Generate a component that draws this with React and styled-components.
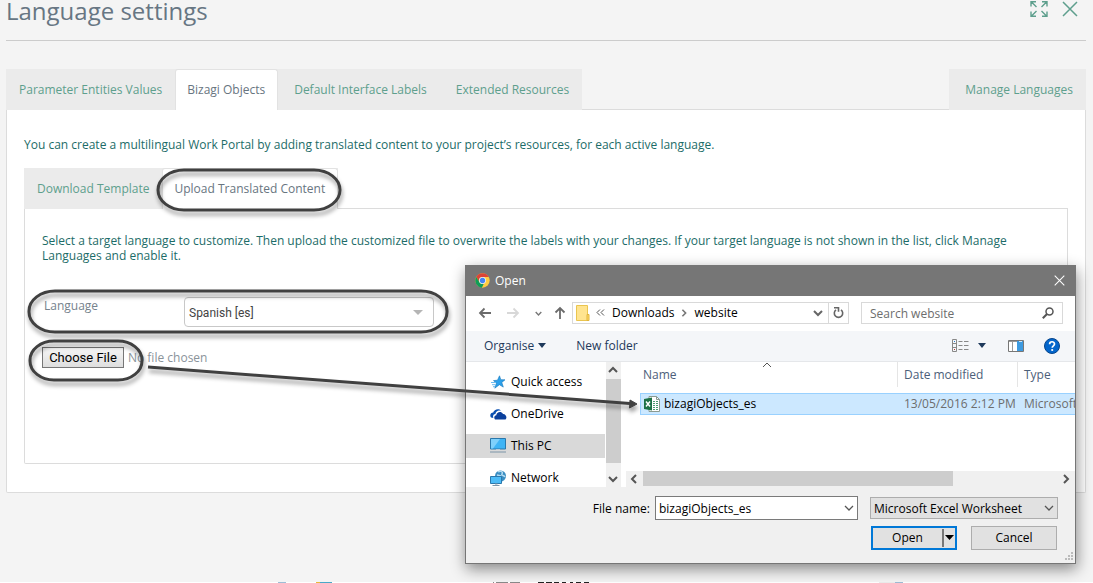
import React from "react";
import styled, { createGlobalStyle } from "styled-components";

const GlobalStyle = createGlobalStyle`
  *, *::before, *::after { box-sizing: border-box; }
  body {
    margin: 0;
    background: #fff;
    font-family: "Open Sans", sans-serif;
    font-size: 12px;
    line-height: 15px;
    overflow: hidden;
  }
  button, input, select { font: inherit; color: inherit; margin: 0; }
  p, h1 { margin: 0; }
  svg { display: block; flex: none; }
`;

/* ---------- Language settings page ---------- */

const Page = styled.main`
  position: relative;
  background: #f4f4f4;
  padding: 0 7px 89px 6px;
`;

const PageHeader = styled.header`
  display: flex;
  justify-content: space-between;
  height: 41px;
  margin-bottom: 28px;
  border-bottom: 1px solid #ccc;
`;

const PageTitle = styled.h1`
  color: #677683;
  font-size: 24px;
  font-weight: 400;
  line-height: 22px;
`;

const HeaderActions = styled.div`
  display: flex;
  align-items: flex-start;
  gap: 14px;
  padding-right: 8px;
`;

const IconButton = styled.button`
  display: flex;
  align-items: center;
  justify-content: center;
  padding: 0;
  border: 0;
  background: none;
  width: ${(p) => p.$width || 18}px;
  height: ${(p) => p.$height || 18}px;
`;

const TabBar = styled.div`
  display: flex;
  justify-content: space-between;
  height: 41px;
  border-bottom: 1px solid #dcdcdc;
`;

const TabGroup = styled.div`
  display: flex;
  height: 41px;
  background: #ebebeb;
`;

const Tab = styled.button`
  height: 41px;
  border: 0;
  padding: 0 13px 0 16px;
  background: none;
  color: #5e9f8d;
  font-size: 12px;
  white-space: nowrap;

  &:first-child:not(:only-child) { padding-left: 13px; }

  &[aria-selected="true"] {
    padding: 0 12px 1px 11px;
    background: #fff;
    color: #68757f;
    border: 1px solid #e2e2e2;
    border-bottom: 0;
    border-radius: 3px 3px 0 0;
  }
`;

const Panel = styled.section`
  border: 1px solid #dcdcdc;
  border-top: 0;
  border-radius: 0 0 2px 2px;
  background: #fff;
  padding: ${(p) => (p.$inner ? "24px 17px 0" : "27px 17px 28px")};
  min-height: ${(p) => (p.$inner ? "255px" : "0")};
`;

const Intro = styled.p`
  color: #1c6c68;
  margin-bottom: ${(p) => p.$gap}px;
`;

const Field = styled.div`
  display: flex;
  align-items: flex-start;
  height: 30px;
  margin-bottom: 20px;
`;

const FieldLabel = styled.label`
  width: 142px;
  padding: 1px 2px;
  color: #75828c;
`;

const SelectBox = styled.div`
  position: relative;
  display: flex;
  align-items: center;
  width: ${(p) => p.$width}px;
  height: ${(p) => p.$height}px;

  select {
    width: 100%;
    height: 100%;
    appearance: none;
    outline: 0;
  }

  svg {
    position: absolute;
    right: ${(p) => p.$arrow}px;
    pointer-events: none;
  }
`;

const LanguageSelect = styled.select`
  border: 1px solid #c8c8c8;
  border-radius: 4px;
  background: #fff;
  color: #444;
  padding: 2px 4px 0;
  font-family: Roboto, sans-serif;
`;

const FilePicker = styled.input`
  display: block;
  height: 21px;
  color: #8a939a;

  &::file-selector-button {
    width: 82px;
    height: 21px;
    margin: 0 4px 0 0;
    padding: 0;
    border: 1px solid #777;
    border-radius: 0;
    background: linear-gradient(#f6f6f6, #dedede);
    color: #000;
    font-family: Roboto, sans-serif;
    font-size: 13px;
    font-weight: 400;
  }
`;

const NextSection = styled.div`
  height: 1px;
  background: #fff;
  overflow: hidden;
`;

/* ---------- File chooser window ---------- */

const Window = styled.div`
  position: absolute;
  left: 465px;
  top: 265px;
  width: 611px;
  border: 1px solid #767676;
  background: #fff;
  color: #000;
  box-shadow: 1px 5px 14px rgba(0, 0, 0, 0.45);
`;

const TitleBar = styled.div`
  display: flex;
  align-items: center;
  gap: 5px;
  height: 30px;
  padding: 0 10px 1px 9px;
  background: #767676;
  color: #fff;

  button { margin-left: auto; }
`;

const NavRow = styled.div`
  display: flex;
  align-items: center;
  height: 35px;
  padding: 0 12px 1px;
`;

const NavArrows = styled.div`
  display: flex;
  align-items: center;
  gap: 11px;
  width: 94px;
`;

const AddressBar = styled.div`
  display: flex;
  align-items: center;
  width: 277px;
  height: 22px;
  margin-right: 12px;
  padding: 0 0 1px 3px;
  border: 1px solid #d9d9d9;
`;

const Ellipsis = styled.svg`
  margin-left: 6px;
`;

const Crumb = styled.a`
  color: #000;
  text-decoration: none;
  margin: 0 5px 0 7px;
`;

const RefreshArea = styled.div`
  display: flex;
  align-items: center;
  margin-left: auto;

  button + button { border-left: 1px solid #d9d9d9; }
`;

const SearchBox = styled.div`
  display: flex;
  align-items: center;
  flex: 1;
  height: 22px;
  padding: 0 8px;
  border: 1px solid #d9d9d9;

  input {
    flex: 1;
    min-width: 0;
    padding: 0;
    border: 0;
    outline: 0;
    background: none;
  }
  input::placeholder { color: #6d6d6d; opacity: 1; }
`;

const Toolbar = styled.div`
  display: flex;
  align-items: center;
  height: 31px;
  padding: 0 15px 1px 18px;
  background: #f4f6f9;
  border-bottom: 1px solid #e5e7ea;
`;

const ToolButton = styled.button`
  display: flex;
  align-items: center;
  gap: ${(p) => p.$gap || 7}px;
  padding: 0;
  border: 0;
  background: none;
  color: #1e395b;
  margin-right: ${(p) => p.$after || 0}px;
  margin-left: ${(p) => (p.$push ? "auto" : "0")};
`;

const Browser = styled.div`
  display: flex;
  height: 125px;
`;

const Places = styled.nav`
  display: flex;
  flex-direction: column;
  gap: 8px;
  width: 140px;
  padding-top: 8px;
  overflow: hidden;
`;

const Place = styled.a`
  display: flex;
  flex: none;
  align-items: center;
  gap: 4px;
  height: 24px;
  margin-right: 1px;
  padding: 0 0 1px 24px;
  background: ${(p) => (p.$current ? "#d9d9d9" : "none")};
  color: #000;
  text-decoration: none;
`;

const ScrollColumn = styled.div`
  display: flex;
  flex-direction: column;
  align-items: center;
  width: 15px;
  margin-right: 5px;
  background: #f0f0f0;
`;

const ScrollRow = styled.div`
  display: flex;
  align-items: center;
  height: 16px;
  background: #f0f0f0;
`;

const ScrollEnd = styled.div`
  display: flex;
  align-items: center;
  justify-content: center;
  width: 17px;
  height: 16px;
  padding: 0 1px 1px 0;
`;

const Thumb = styled.div`
  background: #cdcdcd;
  ${(p) => (p.$vertical ? "width: 15px; flex: 1; margin-bottom: 8px; margin-top: 1px;" : "width: 310px; height: 15px; margin-right: auto; align-self: flex-start;")}
`;

const Files = styled.div`
  position: relative;
  display: flex;
  flex: 1;
  min-width: 0;
  flex-direction: column;
  justify-content: space-between;
  overflow: hidden;
`;

const FileTable = styled.table`
  width: 435px;
  margin-left: 14px;
  table-layout: fixed;
  border-spacing: 0;

  th { padding: 0 0 6px; font-weight: 400; text-align: left; color: #4c607a; }
  th span { display: block; height: 25px; padding: 5px 3px; border-right: 1px solid #e5e5e5; }
  th + th span { padding-left: 6px; }
  th:last-child span { border-right: 0; }
  td {
    height: 22px;
    padding: 0 0 1px 6px;
    background: #cce8ff;
    border: solid #99d1ff;
    border-width: 1px 0;
    color: #6d6d6d;
    white-space: nowrap;
    overflow: hidden;
  }
  td:first-child { border-left-width: 1px; padding-left: 3px; color: #000; }
`;

const FileName = styled.div`
  display: flex;
  align-items: center;
  gap: 4px;
`;

const SortMark = styled.div`
  position: absolute;
  left: 136px;
  top: -2px;
`;

const WindowFooter = styled.div`
  position: relative;
  display: flex;
  flex-direction: column;
  align-items: flex-end;
  gap: 6px;
  padding: 9px 17px 13px;
  background: #f0f0f0;
`;

const FooterRow = styled.div`
  display: flex;
  align-items: center;
  gap: ${(p) => p.$gap}px;
  padding-right: ${(p) => p.$inset || 0}px;

  label { margin-right: 5px; }
`;

const NameBox = styled.div`
  display: flex;
  align-items: center;
  width: 203px;
  height: 24px;
  margin-right: 12px;
  border: 1px solid #7a7a7a;
  background: #fff;

  input {
    flex: 1;
    min-width: 0;
    padding: 1px 3px 0;
    border: 0;
    outline: 0;
    background: none;
  }
`;

const TypeSelect = styled.select`
  border: 1px solid #adadad;
  border-radius: 0;
  background: #e1e1e1;
  padding: 0 3px;
`;

const PushButton = styled.button`
  width: 86px;
  height: 24px;
  padding: 0 0 1px;
  border: 1px solid #adadad;
  background: #e1e1e1;
`;

const SplitButton = styled.div`
  display: flex;
  width: 86px;
  height: 24px;
  border: 2px solid #0078d7;
  background: #e1e1e1;

  button { padding: 0 0 1px; border: 0; background: none; }
  button:first-child { flex: 1; }
  button + button {
    width: 13px;
    margin: 1px 0;
    padding-left: 1px;
    border-left: 2px solid #777;
  }
`;

const Grip = styled.div`
  position: absolute;
  right: 2px;
  bottom: 2px;
`;

/* ---------- Callouts drawn over the page ---------- */

const Callouts = styled.svg`
  position: absolute;
  left: 0;
  top: 0;
  pointer-events: none;
  filter: drop-shadow(1px 4px 2px rgba(0, 0, 0, 0.4));
`;

/* ---------- Drawings ---------- */

const Chevron = ({ dir = "down", size = 10, color = "#555", weight = 1.5 }) => {
  const d = {
    down: "M1 3l4 4 4-4",
    up: "M1 7l4-4 4 4",
    left: "M7 1L3 5l4 4",
    right: "M3 1l4 4-4 4",
  }[dir];
  return (
    <svg width={size} height={size} viewBox="0 0 10 10" fill="none" stroke={color} strokeWidth={weight}>
      <path d={d} />
    </svg>
  );
};

const Triangle = ({ color, width = 8, height = 5 }) => (
  <svg width={width} height={height} viewBox="0 0 8 5" preserveAspectRatio="none">
    <path d="M0 0h8L4 5z" fill={color} />
  </svg>
);

const NavArrow = ({ d, color = "#6b6b6b" }) => (
  <svg width="14" height="14" viewBox="0 0 14 14" fill="none" stroke={color} strokeWidth="1.8">
    <path d={d} />
  </svg>
);

const ExpandIcon = () => (
  <svg width="18" height="18" viewBox="0 0 18 18" fill="none" stroke="#5e9f8d" strokeWidth="1.4">
    <path d="M1 6.500V1.700h5M1.500 2l5 5M12 1.700h5v4.800M16.500 2l-5 5M1 11.500v4.800h5M1.500 16l5-5M12 16.300h5v-4.800M16.500 16l-5-5" />
  </svg>
);

const CrossIcon = ({ size, color }) => (
  <svg width={size} height={size} viewBox="0 0 16 16" fill="none" stroke={color} strokeWidth="1.5">
    <path d="M1 1l14 14M15 1L1 15" />
  </svg>
);

const ChromeIcon = () => (
  <svg width="15" height="15" viewBox="0 0 48 48">
    <circle cx="24" cy="24" r="23" fill="#ffcd40" />
    <path d="M4 12.500A23 23 0 0 1 44 13H24a11 11 0 0 0-9.500 16.500z" fill="#db4437" />
    <path d="M4 12.500l10.500 17A11 11 0 0 0 28 34l-6 13A23 23 0 0 1 4 12.500z" fill="#0f9d58" />
    <circle cx="24" cy="24" r="11" fill="#f1f1f1" />
    <circle cx="24" cy="24" r="8.500" fill="#4285f4" />
  </svg>
);

const FolderIcon = () => (
  <svg width="14" height="16" viewBox="0 0 14 16">
    <path d="M.5.5h11v15H.5z" fill="#ffe48f" stroke="#eac54f" />
    <path d="M11 9.500h2v6h-2z" fill="#ffd966" stroke="#e0b53c" />
  </svg>
);

const RefreshIcon = () => (
  <svg width="11" height="13" viewBox="0 0 11 13" fill="none" stroke="#666" strokeWidth="1.600">
    <path d="M8 3.800A4.200 4.200 0 1 1 3 3.800M1 1.800h4.500v4" />
  </svg>
);

const SearchIcon = () => (
  <svg width="12" height="12" viewBox="0 0 12 12" fill="none" stroke="#555" strokeWidth="1.500">
    <circle cx="7.500" cy="4.500" r="3.500" />
    <path d="M5 7L.8 11.200" strokeWidth="2" />
  </svg>
);

const ViewIcon = () => (
  <svg width="17" height="13" viewBox="0 0 17 13" fill="none" stroke="#888">
    <path d="M.5.500h4v12h-4zM.5 4.500h4M.5 8.500h4M6.500 2.500h4m1.500 0h4.500M6.500 6.500h4m1.500 0h4.500M6.500 10.500h4m1.500 0h4.500" />
    <path d="M2 2.500h1" stroke="#2b7fd0" />
    <path d="M2 10.500h1" stroke="#b33" />
  </svg>
);

const PreviewIcon = () => (
  <svg width="16" height="12" viewBox="0 0 16 12">
    <path d="M.5.500h15v11H.5z" fill="#fff" stroke="#777" />
    <path d="M1 1.500h14M4.500 2v9" stroke="#999" />
    <path d="M9 1h6v10H9z" fill="#3d9ae0" />
    <path d="M11 1.500h3" stroke="#cfe8fb" />
  </svg>
);

const HelpIcon = () => (
  <svg width="16" height="16" viewBox="0 0 16 16">
    <circle cx="8" cy="8" r="7.500" fill="#0366cc" stroke="#07458c" />
    <path d="M5.600 6.200C5.600 3 10.500 3 10.500 6c0 1.800-2.300 1.800-2.300 3.700" fill="none" stroke="#fff" strokeWidth="1.700" />
    <circle cx="8.200" cy="12" r="1.100" fill="#fff" />
  </svg>
);

const StarIcon = () => (
  <svg width="17" height="14" viewBox="0 0 17 14">
    <path d="M9.500 .8l1.300 3.900 4.200.1-3.200 2.600 1.500 4.700-3.900-2.400-4.600 3.500 1.600-5-2.900-2.600 4-.4z" fill="#2ba0ea" stroke="#1477bd" strokeWidth=".6" />
    <path d="M1 7.500h5M2 9.700h3.500M3 11.700h2" stroke="#6bbcf0" />
  </svg>
);

const CloudIcon = () => (
  <svg width="17" height="12" viewBox="0 0 17 12">
    <path d="M1 9.500C-.8 7 1 4.500 3.200 4.500 4 1.500 8.500 0 11 2.500 7 2 5.500 4.500 5.500 6 3 6 2.500 9 3.500 10z" fill="#0a4fb0" />
    <path d="M5 11.500C3.500 9.500 4.500 7.500 6.300 7.300 6.500 4 11 2.500 13 6c3-.2 4.500 4 2.500 5.500z" fill="#0a3f9c" />
  </svg>
);

const MonitorIcon = () => (
  <svg width="17" height="15" viewBox="0 0 17 15">
    <path d="M.5.500h15v10.500H.5z" fill="#3fb4f5" stroke="#2a78ac" />
    <path d="M1 1h9L3 10.500H1z" fill="#7fd0fb" />
    <path d="M6 11h4v1H6z" fill="#b8c9d6" />
    <path d="M0 14h16" stroke="#7d95a8" />
  </svg>
);

const NetworkIcon = () => (
  <svg width="17" height="16" viewBox="0 0 17 16">
    <circle cx="10.500" cy="6" r="5.500" fill="#3b8ec2" />
    <path d="M8 2c3-2 5 0 4 2s2 1 3 3M7 5l4 1" stroke="#b5dcf2" strokeWidth="1.500" fill="none" />
    <path d="M.5 6.500h11v7H.5z" fill="#4dbcf7" stroke="#2a78ac" />
    <path d="M2.500 15.500h7M5 14h2.500" stroke="#7d95a8" />
  </svg>
);

const ExcelIcon = () => (
  <svg width="16" height="16" viewBox="0 0 16 16">
    <path d="M5 .500h7.500l3 3v12H5z" fill="#fff" stroke="#8a9a92" />
    <path d="M12.500.500v3h3" fill="none" stroke="#8a9a92" />
    <path d="M9 5.500h2m1 0h2M9 7.500h2m1 0h2M9 9.500h2m1 0h2M9 11.500h2m1 0h2M9 13.500h2m1 0h2" stroke="#4a9a70" />
    <path d="M0 3l8-1.500v13L0 13z" fill="#1e7145" />
    <path d="M2 5.500l4 5M6 5.500l-4 5" stroke="#fff" strokeWidth="1.500" />
  </svg>
);

const GripIcon = () => (
  <svg width="9" height="9" viewBox="0 0 9 9" fill="#bbb">
    <path d="M7 0h2v2H7zM7 3h2v2H7zM7 6h2v2H7zM4 3h2v2H4zM4 6h2v2H4zM1 6h2v2H1z" />
  </svg>
);

/* ---------- Data ---------- */

const MAIN_TABS = ["Parameter Entities Values", "Bizagi Objects", "Default Interface Labels", "Extended Resources"];
const CONTENT_TABS = ["Download Template", "Upload Translated Content"];
const PLACES = [
  { name: "Quick access", Icon: StarIcon },
  { name: "OneDrive", Icon: CloudIcon },
  { name: "This PC", Icon: MonitorIcon, current: true },
  { name: "Network", Icon: NetworkIcon },
];

const Tabs = ({ items, active }) => (
  <TabGroup>
    {items.map((t) => (
      <Tab key={t} role="tab" aria-selected={t === active}>{t}</Tab>
    ))}
  </TabGroup>
);

const FileChooser = () => (
  <Window role="dialog" aria-label="Open">
    <TitleBar>
      <ChromeIcon />
      <span>Open</span>
      <IconButton $width={12} aria-label="Close window"><CrossIcon size={11} color="#fff" /></IconButton>
    </TitleBar>

    <NavRow>
      <NavArrows>
        <IconButton $width={14} aria-label="Back"><NavArrow d="M13 7H2M6.500 2.500L2 7l4.500 4.500" /></IconButton>
        <IconButton $width={20} aria-label="Forward"><NavArrow color="#d8d8d8" d="M1 7h11M7.500 2.500L12 7l-4.500 4.500" /></IconButton>
        <IconButton $width={8} aria-label="Recent locations"><Chevron size={7} weight={2} color="#777" /></IconButton>
        <IconButton $width={14} aria-label="Up"><NavArrow d="M7 13V2M2.500 6.500L7 2l4.500 4.500" /></IconButton>
      </NavArrows>
      <AddressBar>
        <FolderIcon />
        <Ellipsis width="9" height="7" viewBox="0 0 9 7" fill="none" stroke="#555">
          <path d="M4 .5l-3 3 3 3M8 .5l-3 3 3 3" />
        </Ellipsis>
        <Crumb href="#downloads">Downloads</Crumb>
        <Chevron dir="right" size={8} weight={2} color="#777" />
        <Crumb href="#website">website</Crumb>
        <RefreshArea>
          <IconButton $width={20} $height={20} aria-label="Previous locations"><Chevron weight={2} color="#666" /></IconButton>
          <IconButton $width={20} $height={20} aria-label="Refresh"><RefreshIcon /></IconButton>
        </RefreshArea>
      </AddressBar>
      <SearchBox>
        <input type="text" aria-label="Search website" placeholder="Search website" />
        <SearchIcon />
      </SearchBox>
    </NavRow>

    <Toolbar>
      <ToolButton $gap={4} $after={30}>Organise <Triangle color="#1e395b" /></ToolButton>
      <ToolButton>New folder</ToolButton>
      <ToolButton $push $after={22} $gap={9} aria-label="Change view"><ViewIcon /><Triangle color="#1e395b" /></ToolButton>
      <ToolButton $after={20} aria-label="Preview pane"><PreviewIcon /></ToolButton>
      <ToolButton aria-label="Help"><HelpIcon /></ToolButton>
    </Toolbar>

    <Browser>
      <Places>
        {PLACES.map(({ name, Icon, current }) => (
          <Place key={name} href={"#" + name.toLowerCase().replace(" ", "-")} $current={current}>
            <Icon />
            {name}
          </Place>
        ))}
      </Places>
      <ScrollColumn>
        <ScrollEnd><Chevron dir="up" weight={2} /></ScrollEnd>
        <Thumb $vertical />
        <ScrollEnd><Chevron weight={2} /></ScrollEnd>
      </ScrollColumn>
      <Files>
        <FileTable>
          <colgroup>
            <col width="258" />
            <col width="120" />
            <col />
          </colgroup>
          <thead>
            <tr>
              <th><span>Name</span></th>
              <th><span>Date modified</span></th>
              <th><span>Type</span></th>
            </tr>
          </thead>
          <tbody>
            <tr>
              <td><FileName><ExcelIcon />bizagiObjects_es</FileName></td>
              <td>13/05/2016 2:12 PM</td>
              <td>Microsoft</td>
            </tr>
          </tbody>
        </FileTable>
        <SortMark><Chevron dir="up" weight={1} /></SortMark>
        <ScrollRow>
          <ScrollEnd><Chevron dir="left" weight={2} /></ScrollEnd>
          <Thumb />
          <ScrollEnd><Chevron dir="right" weight={2} /></ScrollEnd>
        </ScrollRow>
      </Files>
    </Browser>

    <WindowFooter>
      <FooterRow $gap={0}>
        <label htmlFor="file-name">File name:</label>
        <NameBox>
          <input id="file-name" type="text" defaultValue="bizagiObjects_es" />
          <IconButton $width={16} $height={22} aria-label="Recent file names"><Chevron weight={1.3} /></IconButton>
        </NameBox>
        <SelectBox $width={188} $height={22} $arrow={4}>
          <TypeSelect aria-label="File type"><option>Microsoft Excel Worksheet</option></TypeSelect>
          <Chevron weight={1.3} />
        </SelectBox>
      </FooterRow>
      <FooterRow $gap={14} $inset={1}>
        <SplitButton>
          <button>Open</button>
          <button aria-label="More open options"><Triangle color="#000" width={9} /></button>
        </SplitButton>
        <PushButton>Cancel</PushButton>
      </FooterRow>
      <Grip><GripIcon /></Grip>
    </WindowFooter>
  </Window>
);

export default function App() {
  return (
    <>
      <GlobalStyle />
      <Page>
        <PageHeader>
          <PageTitle>Language settings</PageTitle>
          <HeaderActions>
            <IconButton aria-label="Full screen"><ExpandIcon /></IconButton>
            <IconButton $width={16} aria-label="Close"><CrossIcon size={16} color="#5e9f8d" /></IconButton>
          </HeaderActions>
        </PageHeader>

        <TabBar role="tablist">
          <Tabs items={MAIN_TABS} active="Bizagi Objects" />
          <Tabs items={["Manage Languages"]} />
        </TabBar>

        <Panel>
          <Intro $gap={16}>
            You can create a multilingual Work Portal by adding translated content to your project’s resources, for each active language.
          </Intro>
          <TabBar role="tablist">
            <Tabs items={CONTENT_TABS} active="Upload Translated Content" />
          </TabBar>
          <Panel $inner>
            <Intro $gap={34}>
              Select a target language to customize. Then upload the customized file to overwrite the labels with your changes. If your target language is not shown in the list, click Manage Languages and enable it.
            </Intro>
            <Field>
              <FieldLabel htmlFor="language">Language</FieldLabel>
              <SelectBox $width={250} $height={30} $arrow={11}>
                <LanguageSelect id="language"><option>Spanish [es]</option></LanguageSelect>
                <Triangle color="#b5b5b5" width={10} />
              </SelectBox>
            </Field>
            <FilePicker type="file" aria-label="Translated content file" />
          </Panel>
        </Panel>

        <FileChooser />

        <Callouts width="650" height="430" viewBox="0 0 650 430" fill="none" stroke="#404040" strokeWidth="3" aria-hidden="true">
          <rect x="158" y="170" width="182" height="40" rx="26" ry="20" />
          <rect x="29" y="291" width="418" height="41" rx="26" ry="20" />
          <rect x="30" y="341" width="112" height="39" rx="24" ry="19" />
          <path d="M148 367L630 403.500" />
          <path d="M630 400l7 4-7.500 4z" fill="#404040" strokeWidth="1" />
        </Callouts>
      </Page>

      <NextSection>
        <svg width="910" height="1" viewBox="0 0 910 1">
          <path d="M278 0h8v1h-8zM895 0h8v1h-8z" fill="#9dbdd6" />
          <path d="M879 0h16v1h-16z" fill="#ececec" />
          <path d="M316 0h4v1h-4z" fill="#e8b73a" />
          <path d="M320 0h12v1h-12z" fill="#4aa8c8" />
          <path d="M493 0h1v1h-1zM496 0h12v1h-12zM510 0h10v1h-10z" fill="#8a8a8a" />
          <path d="M538 0h6v1h-6zM546 0h6v1h-6zM554 0h5v1h-5zM562 0h4v1h-4zM570 0h3v1h-3zM576 0h5v1h-5zM584 0h5v1h-5z" fill="#222" />
        </svg>
      </NextSection>
    </>
  );
}
